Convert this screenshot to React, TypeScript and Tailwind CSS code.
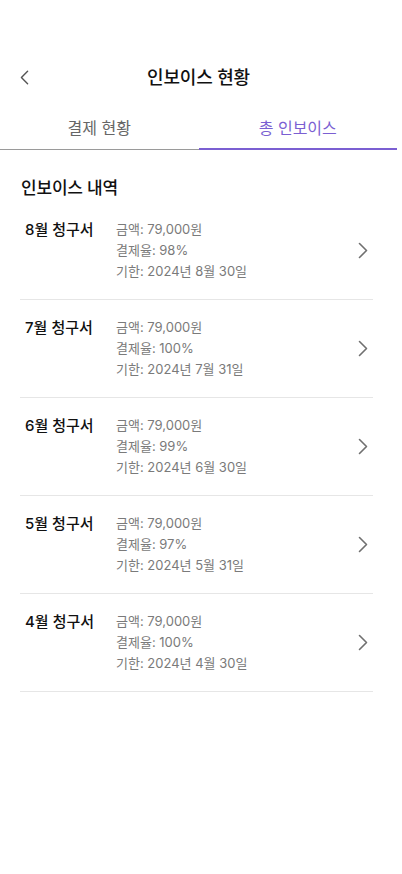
const invoices = [
  { month: 8, amount: '79,000원', rate: '98%', due: '2024년 8월 30일' },
  { month: 7, amount: '79,000원', rate: '100%', due: '2024년 7월 31일' },
  { month: 6, amount: '79,000원', rate: '99%', due: '2024년 6월 30일' },
  { month: 5, amount: '79,000원', rate: '97%', due: '2024년 5월 31일' },
  { month: 4, amount: '79,000원', rate: '100%', due: '2024년 4월 30일' },
]

function Chevron({ dir, className = '' }: { dir: 'left' | 'right'; className?: string }) {
  return (
    <svg width="10" height="17" viewBox="0 0 10 17" fill="none" className={className}>
      <path
        d={dir === 'right' ? 'M1.5 1.5 L8.5 8.5 L1.5 15.5' : 'M8.5 1.5 L1.5 8.5 L8.5 15.5'}
        stroke="currentColor"
        strokeWidth="1.6"
        strokeLinecap="round"
        strokeLinejoin="round"
      />
    </svg>
  )
}

export default function App() {
  return (
    <div
      className="min-h-[874px] w-[402px] bg-white text-[#111]"
      style={{ fontFamily: 'Inter, "Noto Sans CJK KR", sans-serif' }}
    >
      <div className="w-[397px] pt-[55px]">
        <header className="h-[44px] flex items-center relative">
          <button className="absolute left-[20px] flex items-center text-[#555]">
            <Chevron dir="left" className="w-[9px] h-[15px]" />
          </button>
          <div className="flex-1 text-center text-[18px] font-medium tracking-[-0.2px]">인보이스 현황</div>
        </header>

        <div className="flex h-[51px]">
          <button className="flex-1 flex items-end justify-center pb-[9px] text-[16px] text-[#666] border-b border-[#9a9a9a]">
            결제 현황
          </button>
          <button className="flex-1 flex items-end justify-center pb-[8px] text-[16px] text-[#7b5fd2] border-b-2 border-[#7b5fd2]">
            총 인보이스
          </button>
        </div>

        <div className="pl-[20px] pr-[24px] pt-[26px]">
          <h2 className="text-[17px] font-medium tracking-[-0.2px] pl-[1px]">인보이스 내역</h2>
          <div>
            {invoices.map((inv) => (
              <div key={inv.month} className="flex items-center py-[17px] pl-[5px] pr-[5px] border-b border-[#e6e6e6]">
                <div className="w-[91px] self-start text-[15px] font-medium leading-[21px]">{inv.month}월 청구서</div>
                <div className="flex-1 text-[13px] leading-[21px] text-[#7a7a7a]">
                  <div>금액: {inv.amount}</div>
                  <div>결제율: {inv.rate}</div>
                  <div>기한: {inv.due}</div>
                </div>
                <Chevron dir="right" className="text-[#707070]" />
              </div>
            ))}
          </div>
        </div>
      </div>
    </div>
  )
}
